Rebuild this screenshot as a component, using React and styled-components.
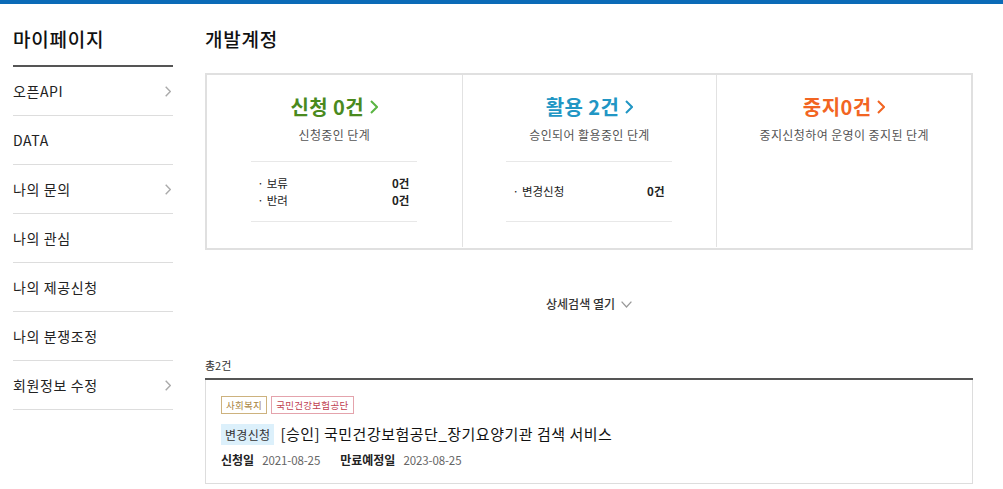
import styled, { createGlobalStyle } from "styled-components";

const GlobalStyle = createGlobalStyle`
  html, body {
    margin: 0;
    padding: 0;
    background: #fff;
    font-family: "Noto Sans CJK KR", "Liberation Sans", sans-serif;
    color: #222;
  }
  * { box-sizing: border-box; }
`;

const TopBar = styled.div`
  height: 4px;
  background: #0b6bb7;
`;

const Layout = styled.div`
  display: flex;
  align-items: flex-start;
  padding-left: 13px;
`;

const Side = styled.aside`
  width: 160px;
  flex-shrink: 0;
`;

const SideTitle = styled.h2`
  margin: 0;
  padding: 22px 0 13px;
  font-size: 19px;
  line-height: 26px;
  font-weight: 500;
  letter-spacing: 0.8px;
  color: #111;
  border-bottom: 2px solid #555;
`;

const MenuItem = styled.div`
  display: flex;
  align-items: center;
  justify-content: space-between;
  height: 49px;
  border-bottom: 1px solid #ddd;
  font-size: 14px;
  letter-spacing: 0.6px;
  color: #222;
  padding-right: 2px;
`;

const Main = styled.main`
  margin-left: 32px;
  width: 768px;
`;

const PageTitle = styled.h1`
  margin: 0;
  padding: 22px 0 0;
  font-size: 19px;
  line-height: 26px;
  font-weight: 500;
  letter-spacing: 0.8px;
  color: #111;
  height: 69px;
`;

const StatusBox = styled.section`
  display: grid;
  grid-template-columns: repeat(3, 1fr);
  height: 177px;
  border: 2px solid #e0e0e0;
  padding: 0 0 1px;
`;

const StatusCol = styled.div`
  display: flex;
  flex-direction: column;
  align-items: center;
  padding-top: 18px;
  & + & {
    border-left: 1px solid #e2e2e2;
  }
`;

const StatusTitle = styled.div`
  display: flex;
  align-items: center;
  gap: 6px;
  font-size: 20px;
  line-height: 28px;
  font-weight: 700;
  letter-spacing: 0.4px;
  color: ${(p) => p.$color};
`;

const StatusDesc = styled.div`
  margin-top: 5px;
  font-size: 12px;
  line-height: 18px;
  color: #555;
  letter-spacing: 0.4px;
`;

const SubList = styled.ul`
  list-style: none;
  margin: 17px 0 0;
  padding: 0 8px 0 6px;
  width: 166px;
  height: 61px;
  border-top: 1px solid #e8e8e8;
  border-bottom: 1px solid #e8e8e8;
  display: flex;
  flex-direction: column;
  justify-content: center;
`;

const SubItem = styled.li`
  display: flex;
  justify-content: space-between;
  font-size: 11.5px;
  line-height: 17px;
  color: #222;
  b { font-weight: 700; }
  span::before {
    content: "·";
    margin-right: 3px;
  }
`;

const DetailToggle = styled.div`
  display: flex;
  justify-content: center;
  align-items: center;
  gap: 6px;
  margin-top: 44px;
  font-size: 12px;
  font-weight: 500;
  line-height: 20px;
  color: #333;
`;

const Count = styled.div`
  margin-top: 43px;
  font-size: 11px;
  line-height: 16px;
  color: #333;
`;

const ResultList = styled.div`
  margin-top: 5px;
  border-top: 2px solid #555;
`;

const ResultItem = styled.div`
  border: 1px solid #ddd;
  border-top: none;
  padding: 16px 15px 14px;
`;

const Tags = styled.div`
  display: flex;
  gap: 4px;
`;

const Tag = styled.span`
  display: inline-flex;
  align-items: center;
  height: 18px;
  padding: 0 4px;
  font-size: 9.5px;
  letter-spacing: 0.3px;
  color: ${(p) => p.$color};
  border: 1px solid ${(p) => p.$border};
`;

const TitleRow = styled.div`
  display: flex;
  align-items: center;
  gap: 6px;
  margin-top: 9px;
`;

const Badge = styled.span`
  display: inline-flex;
  align-items: center;
  height: 21px;
  padding: 0 4px;
  background: #dcf0fb;
  font-size: 12px;
  letter-spacing: 0.3px;
  color: #333;
`;

const ItemTitle = styled.span`
  font-size: 15px;
  line-height: 22px;
  color: #111;
  letter-spacing: 0.5px;
`;

const Meta = styled.dl`
  display: flex;
  align-items: center;
  margin: 6px 0 0;
  font-size: 12px;
  line-height: 18px;
  dt {
    font-weight: 700;
    color: #222;
    margin-right: 8px;
  }
  dd {
    margin: 0 20px 0 0;
    font-size: 11.5px;
    letter-spacing: -0.1px;
    color: #666;
  }
`;

function Chevron({ color = "#999", w = 6, h = 10, sw = 1.3 }) {
  return (
    <svg width={w} height={h} viewBox={`0 0 ${w} ${h}`} fill="none">
      <polyline
        points={`${sw / 2},${sw / 2} ${w - sw / 2},${h / 2} ${sw / 2},${h - sw / 2}`}
        stroke={color}
        strokeWidth={sw}
      />
    </svg>
  );
}

const menu = [
  { label: "오픈API", arrow: true },
  { label: "DATA" },
  { label: "나의 문의", arrow: true },
  { label: "나의 관심" },
  { label: "나의 제공신청" },
  { label: "나의 분쟁조정" },
  { label: "회원정보 수정", arrow: true },
];

const statuses = [
  {
    title: "신청 0건",
    color: "#4a8a1e",
    arrow: "#5ab543",
    desc: "신청중인 단계",
    items: [
      ["보류", "0건"],
      ["반려", "0건"],
    ],
  },
  {
    title: "활용 2건",
    color: "#2196c4",
    arrow: "#2196c4",
    desc: "승인되어 활용중인 단계",
    items: [["변경신청", "0건"]],
  },
  {
    title: "중지0건",
    color: "#f26522",
    arrow: "#f26522",
    desc: "중지신청하여 운영이 중지된 단계",
  },
];

export default function App() {
  return (
    <>
      <GlobalStyle />
      <TopBar />
      <Layout>
        <Side>
          <SideTitle>마이페이지</SideTitle>
          {menu.map((m) => (
            <MenuItem key={m.label}>
              {m.label}
              {m.arrow && <Chevron color="#aaa" w={6} h={11} sw={1.4} />}
            </MenuItem>
          ))}
        </Side>
        <Main>
          <PageTitle>개발계정</PageTitle>
          <StatusBox>
            {statuses.map((s) => (
              <StatusCol key={s.title}>
                <StatusTitle $color={s.color}>
                  {s.title}
                  <Chevron color={s.arrow} w={8} h={14} sw={2} />
                </StatusTitle>
                <StatusDesc>{s.desc}</StatusDesc>
                {s.items && (
                  <SubList>
                    {s.items.map(([k, v]) => (
                      <SubItem key={k}>
                        <span>{k}</span>
                        <b>{v}</b>
                      </SubItem>
                    ))}
                  </SubList>
                )}
              </StatusCol>
            ))}
          </StatusBox>
          <DetailToggle>
            상세검색 열기
            <svg width="11" height="7" viewBox="0 0 11 7" fill="none">
              <polyline points="0.6,0.6 5.5,6 10.4,0.6" stroke="#999" strokeWidth="1.3" />
            </svg>
          </DetailToggle>
          <Count>총2건</Count>
          <ResultList>
            <ResultItem>
              <Tags>
                <Tag $color="#a88440" $border="#cdb27e">사회복지</Tag>
                <Tag $color="#c0404f" $border="#e4a3ac">국민건강보험공단</Tag>
              </Tags>
              <TitleRow>
                <Badge>변경신청</Badge>
                <ItemTitle>[승인] 국민건강보험공단_장기요양기관 검색 서비스</ItemTitle>
              </TitleRow>
              <Meta>
                <dt>신청일</dt>
                <dd>2021-08-25</dd>
                <dt>만료예정일</dt>
                <dd>2023-08-25</dd>
              </Meta>
            </ResultItem>
          </ResultList>
        </Main>
      </Layout>
    </>
  );
}
